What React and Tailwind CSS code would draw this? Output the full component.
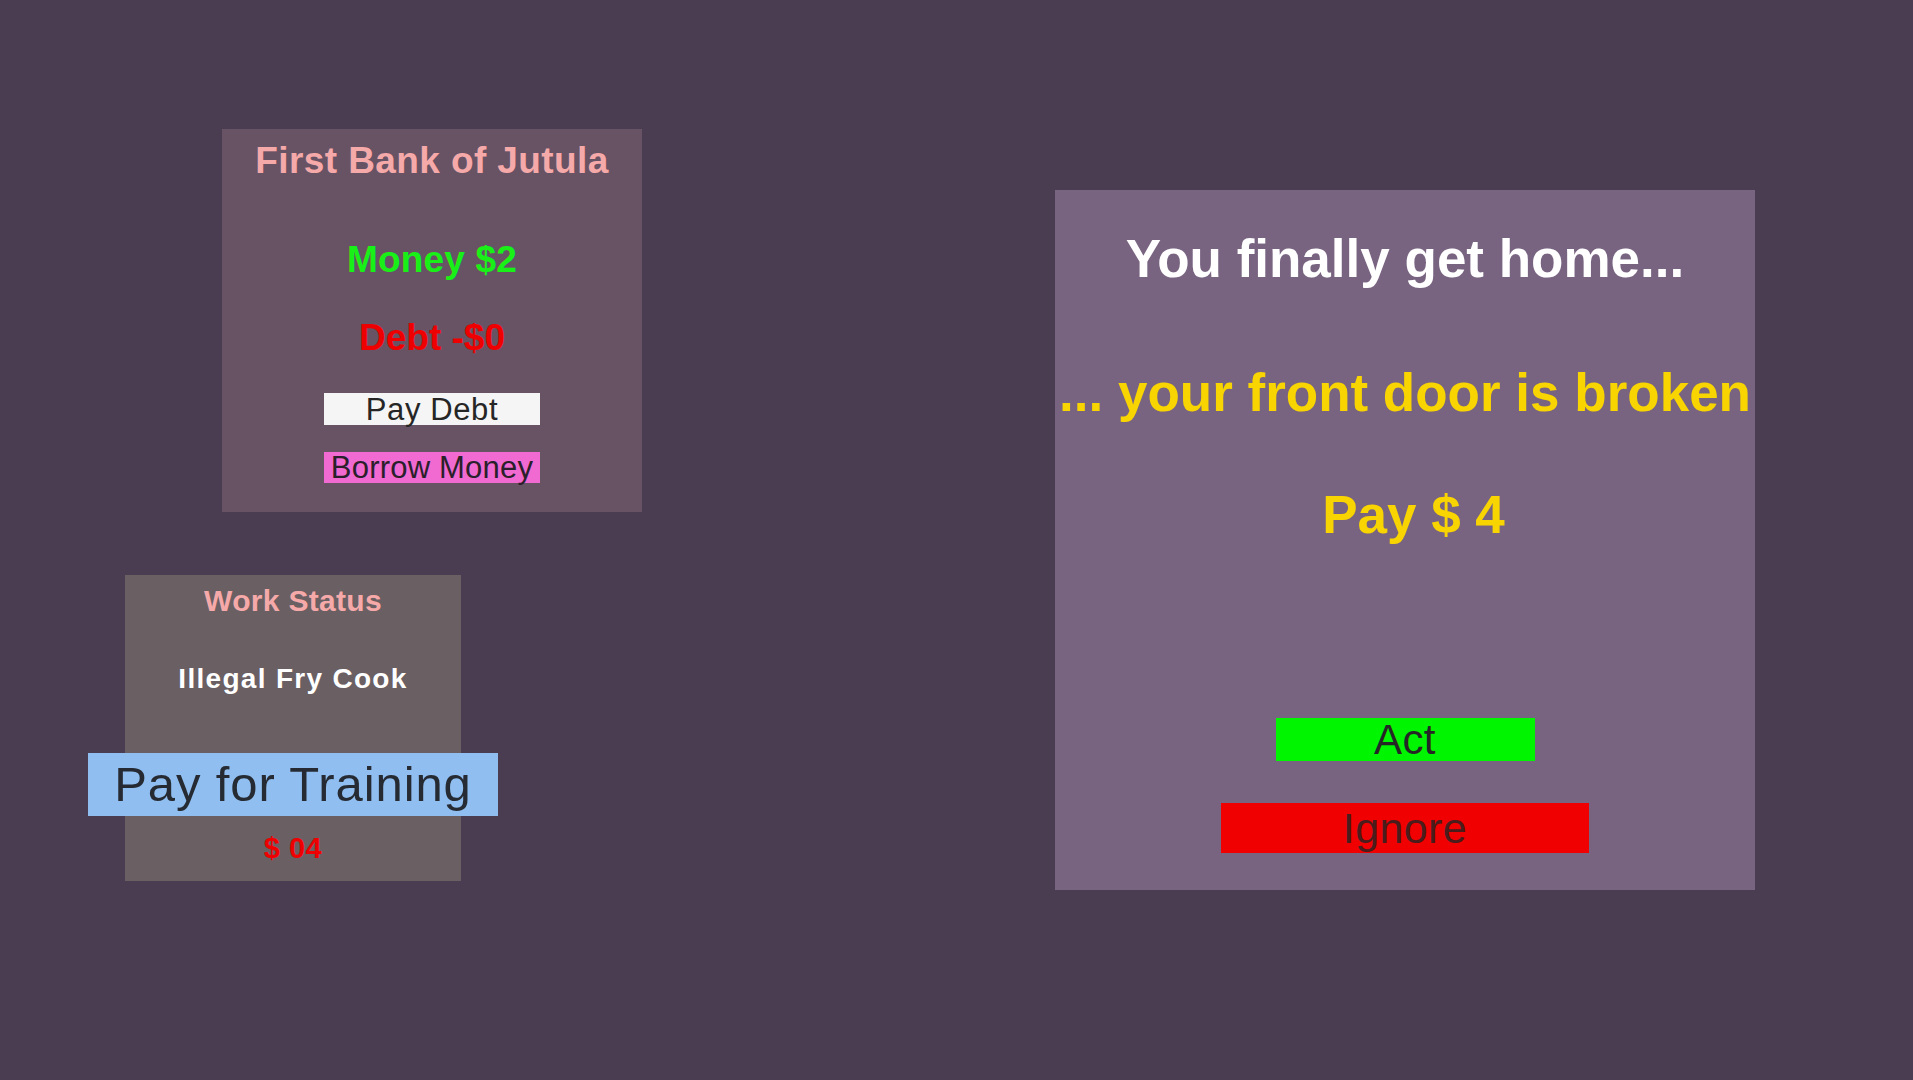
export default function App() {
  return (
    <div className="flex min-h-[1080px] w-full items-start bg-[#4b3d51] font-['Liberation_Sans',Arial,sans-serif]">
      <div className="flex w-[642px] shrink-0 flex-col items-start pl-[125px] pt-[129px]">
        <BankPanel />
        <WorkPanel />
      </div>
      <EventPanel />
    </div>
  )
}

function BankPanel() {
  return (
    <section className="ml-[97px] flex h-[383px] w-[420px] flex-col items-center bg-[#685364] pt-[13px]">
      <h2 className="whitespace-nowrap text-[37px] font-bold leading-none tracking-[0.4px] text-[#f6a9a9]">
        First Bank of Jutula
      </h2>
      <p className="mt-[62px] text-[37px] font-bold leading-none tracking-[0.2px] text-[#18f018]">
        Money $2
      </p>
      <p className="mt-[41px] text-[37px] font-bold leading-none text-[#ee0000]">
        Debt -$0
      </p>
      <button
        type="button"
        className="mt-[37px] flex h-[32px] w-[216px] items-center justify-center whitespace-nowrap bg-[#f5f5f5] text-[31px] leading-none tracking-[0.6px] text-[#262626]"
      >
        Pay Debt
      </button>
      <button
        type="button"
        className="mt-[27px] flex h-[31px] w-[216px] items-center justify-center whitespace-nowrap bg-[#f06ad2] text-[31px] leading-none tracking-[0.2px] text-[#2a1f2a]"
      >
        Borrow Money
      </button>
    </section>
  )
}

function WorkPanel() {
  return (
    <section className="mt-[63px] flex h-[306px] w-[336px] flex-col items-center bg-[#6a5f63] pt-[11px]">
      <h3 className="whitespace-nowrap text-[30px] font-bold leading-none tracking-[0.3px] text-[#f6a9a9]">
        Work Status
      </h3>
      <p className="mt-[49px] whitespace-nowrap text-[28px] font-bold leading-none tracking-[1.3px] text-white">
        Illegal Fry Cook
      </p>
      <button
        type="button"
        className="mt-[60px] flex h-[63px] w-[410px] shrink-0 items-center justify-center whitespace-nowrap bg-[#90bef0] text-[49px] leading-none tracking-[0.9px] text-[#262b33]"
      >
        Pay for Training
      </button>
      <p className="mt-[18px] whitespace-nowrap text-[29px] font-bold leading-none tracking-[0.5px] text-[#ee0000]">
        $ 04
      </p>
    </section>
  )
}

function EventPanel() {
  return (
    <section className="ml-[413px] mt-[190px] flex h-[700px] w-[700px] shrink-0 flex-col items-center bg-[#786380] pt-[42px]">
      <h1 className="whitespace-nowrap text-[53px] font-bold leading-none text-white">
        You finally get home...
      </h1>
      <p className="mt-[81px] whitespace-nowrap text-[53px] font-bold leading-none text-[#f8d400]">
        ... your front door is broken
      </p>
      <p className="ml-[17px] mt-[69px] whitespace-nowrap text-[53px] font-bold leading-none text-[#f8d400]">
        Pay $ 4
      </p>
      <button
        type="button"
        className="mt-[177px] flex h-[43px] w-[259px] items-center justify-center bg-[#00f500] text-[42px] leading-none tracking-[0.4px] text-[#262626]"
      >
        Act
      </button>
      <button
        type="button"
        className="mt-[42px] flex h-[50px] w-[368px] items-center justify-center bg-[#f00000] text-[43px] leading-none tracking-[0.4px] text-[#4a1c1c]"
      >
        Ignore
      </button>
    </section>
  )
}
